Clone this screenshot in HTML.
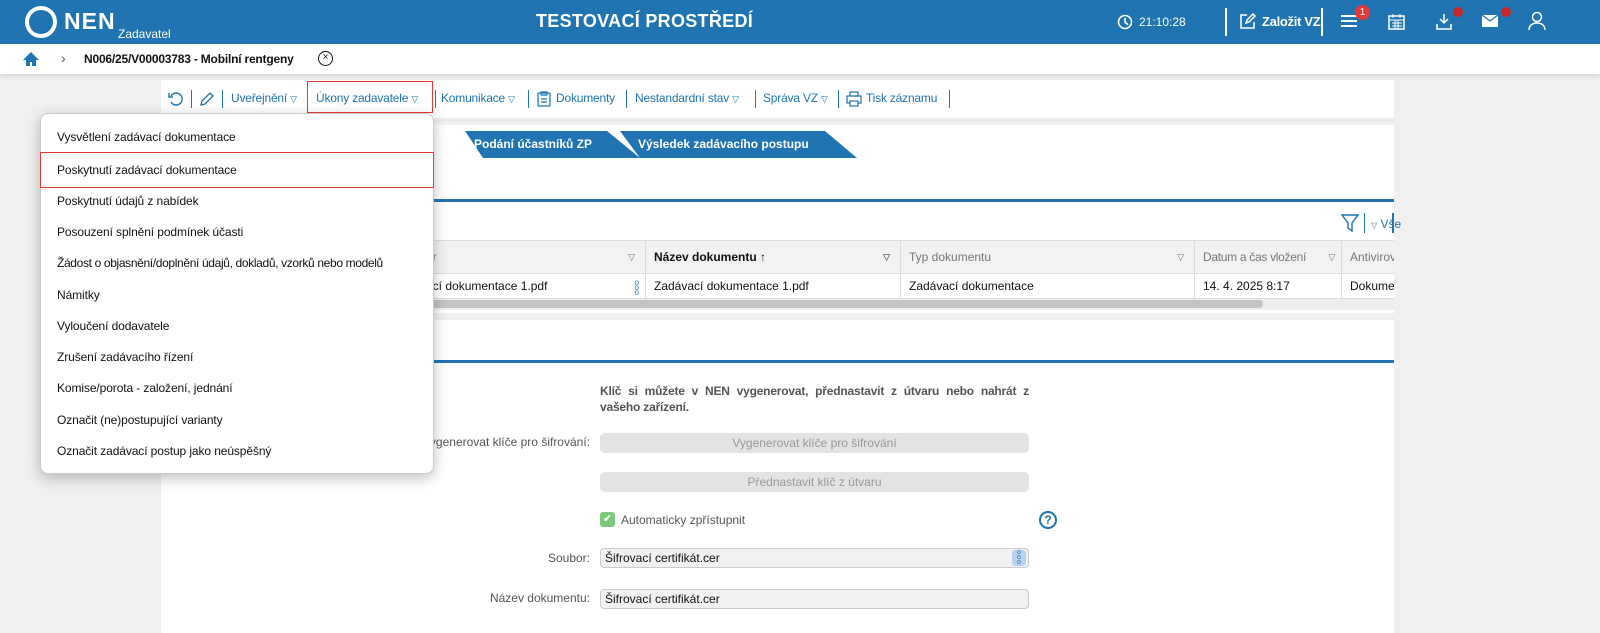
<!DOCTYPE html>
<html><head><meta charset="utf-8">
<style>
*{box-sizing:border-box;margin:0;padding:0}
body{width:1600px;height:633px;overflow:hidden;background:#f0f0f0;font-family:"Liberation Sans",sans-serif;font-size:12px;color:#111;position:relative;white-space:nowrap}
.abs{position:absolute}
#hdr{left:0;top:0;width:1600px;height:44px;background:#1f74b1;color:#fff}
#bc{left:0;top:44px;width:1600px;height:30px;background:#fff;box-shadow:0 2px 4px rgba(0,0,0,.12)}
.panel{background:#fff;left:161px;width:1233px}
.tb{color:#1f74b1;font-size:12px;top:91px;letter-spacing:-.2px}
.sep{width:1px;height:18px;background:#1f74b1;top:90px}
.tab{top:131px;height:27px;background:#1f74b1;color:#fff;font-weight:bold;font-size:12px;line-height:27px}
.th{top:241px;height:33px;background:#f2f2f2;border-right:1px solid #ddd;color:#777;line-height:33px;padding-left:8px;font-size:12px;overflow:hidden}
.td{top:274px;height:24px;border-right:1px solid #ddd;line-height:24px;padding-left:8px;font-size:12px;overflow:hidden}
.tri{font-size:9px;color:#777}
#dd{left:40px;top:113px;width:394px;height:361px;background:#fff;border:1px solid #ccc;border-radius:8px;box-shadow:0 4px 14px rgba(0,0,0,.25)}
#dd div{position:absolute;left:16px;font-size:12px;color:#111;letter-spacing:-.1px}
.btn{left:600px;width:429px;height:20px;background:#e3e3e3;border-radius:5px;color:#999;text-align:center;line-height:20px;font-size:12px}
.inp{left:600px;width:429px;height:20px;background:#f1f1f1;border:1px solid #ccc;border-radius:4px;line-height:18px;padding-left:4px;font-size:12px}
.lbl{text-align:right;color:#555;font-size:12px}
</style></head><body>
<div id="hdr" class="abs">
 <svg class="abs" style="left:24px;top:6px" width="34" height="32" viewBox="0 0 34 32"><circle cx="17" cy="16" r="14" fill="none" stroke="#fff" stroke-width="4"/><path d="M9 25 L25 7" stroke="#1f74b1" stroke-width="5"/></svg>
 <div class="abs" style="left:64px;top:8px;font-size:23px;font-weight:bold;letter-spacing:1px">NEN</div>
 <div class="abs" style="left:118px;top:27px;font-size:12px">Zadavatel</div>
 <div class="abs" style="left:536px;top:11px;font-size:18px;font-weight:bold;letter-spacing:.3px">TESTOVACÍ PROSTŘEDÍ</div>
 <svg class="abs" style="left:1117px;top:14px" width="16" height="16"><circle cx="8" cy="8" r="6.5" fill="none" stroke="#fff" stroke-width="1.6"/><path d="M8 4v4l3 3" stroke="#fff" stroke-width="1.6" fill="none"/></svg>
 <div class="abs" style="left:1139px;top:15px;font-size:12px">21:10:28</div>
 <div class="abs" style="left:1225px;top:8px;width:2px;height:28px;background:#fff"></div>
 <svg class="abs" style="left:1239px;top:12px" width="18" height="18"><path d="M8 3H2v13h13v-6" fill="none" stroke="#fff" stroke-width="1.5"/><path d="M7 11l1-3 6-6 2 2-6 6z" fill="none" stroke="#fff" stroke-width="1.5"/></svg>
 <div class="abs" style="left:1262px;top:14px;font-size:13px;font-weight:bold;letter-spacing:-.3px">Založit VZ</div>
 <div class="abs" style="left:1321px;top:8px;width:2px;height:28px;background:#fff"></div>
 <div class="abs" style="left:1341px;top:15px;width:16px;height:2px;background:#fff;box-shadow:0 5px 0 #fff,0 10px 0 #fff"></div>
 <div class="abs" style="left:1355px;top:5px;width:15px;height:15px;border-radius:50%;background:#e53935;font-size:10px;text-align:center;line-height:15px">1</div>
 <svg class="abs" style="left:1388px;top:13px" width="18" height="18"><rect x="1" y="3" width="15" height="13" fill="none" stroke="#fff" stroke-width="1.5"/><path d="M1 7h15M5 1v4M12 1v4M4 10h10M4 13h10M7 7v9M10 7v9" stroke="#fff" stroke-width="1"/></svg>
 <svg class="abs" style="left:1434px;top:12px" width="20" height="20"><path d="M10 2v9M6 7l4 4 4-4M3 12v5h14v-5" fill="none" stroke="#fff" stroke-width="1.5"/></svg>
 <div class="abs" style="left:1453px;top:7px;width:10px;height:10px;border-radius:50%;background:#c62828"></div>
 <svg class="abs" style="left:1481px;top:14px" width="18" height="14"><rect x="1" y="1" width="16" height="12" fill="#fff"/><path d="M1 1l8 6 8-6" fill="none" stroke="#1f74b1" stroke-width="1.2"/></svg>
 <div class="abs" style="left:1501px;top:7px;width:10px;height:10px;border-radius:50%;background:#c62828"></div>
 <svg class="abs" style="left:1528px;top:11px" width="18" height="20"><circle cx="9" cy="6" r="4.5" fill="none" stroke="#fff" stroke-width="1.5"/><path d="M1 19c0-5 4-7 8-7s8 2 8 7" fill="none" stroke="#fff" stroke-width="1.5"/></svg>
</div>
<div id="bc" class="abs">
 <svg class="abs" style="left:22px;top:7px" width="18" height="16"><path d="M9 1L1 9h3v6h4v-4h2v4h4V9h3z" fill="#1f74b1"/></svg>
 <div class="abs" style="left:61px;top:6px;color:#555;font-size:14px">›</div>
 <div class="abs" style="left:84px;top:8px;font-weight:bold;font-size:12px;letter-spacing:-.2px">N006/25/V00003783 - Mobilní rentgeny</div>
 <div class="abs" style="left:318px;top:7px;width:15px;height:15px;border:1.5px solid #111;border-radius:50%;font-size:10px;text-align:center;line-height:12px">×</div>
</div>
<div class="abs panel" style="top:80px;height:38px"></div>
<div class="abs" style="left:161px;top:118px;width:1233px;height:4px;background:#ececec"></div>
<svg class="abs" style="left:168px;top:91px" width="16" height="16"><path d="M3 5a6 6 0 1 1 0 6" fill="none" stroke="#1f74b1" stroke-width="1.4"/><path d="M1 2v4h4" fill="none" stroke="#1f74b1" stroke-width="1.4"/></svg>
<div class="abs sep" style="left:191px"></div>
<svg class="abs" style="left:199px;top:91px" width="16" height="16"><path d="M2 14l1-4 8-8 3 3-8 8z" fill="none" stroke="#1f74b1" stroke-width="1.3"/></svg>
<div class="abs sep" style="left:222px"></div>
<div class="abs tb" style="left:231px">Uveřejnění <span style="font-size:9px">▽</span></div>
<div class="abs" style="left:307px;top:81px;width:126px;height:32px;border:1.5px solid #e53935"></div>
<div class="abs tb" style="left:316px">Úkony zadavatele <span style="font-size:9px">▽</span></div>
<div class="abs sep" style="left:435px"></div>
<div class="abs tb" style="left:441px">Komunikace <span style="font-size:9px">▽</span></div>
<div class="abs sep" style="left:528px"></div>
<svg class="abs" style="left:537px;top:91px" width="14" height="16"><rect x="1" y="2" width="12" height="13" rx="1" fill="none" stroke="#1f74b1" stroke-width="1.3"/><path d="M4 1h6v3H4zM4 8h6M4 11h6" fill="none" stroke="#1f74b1" stroke-width="1.2"/></svg>
<div class="abs tb" style="left:556px">Dokumenty</div>
<div class="abs sep" style="left:626px"></div>
<div class="abs tb" style="left:635px">Nestandardní stav <span style="font-size:9px">▽</span></div>
<div class="abs sep" style="left:755px"></div>
<div class="abs tb" style="left:763px">Správa VZ <span style="font-size:9px">▽</span></div>
<div class="abs sep" style="left:838px"></div>
<svg class="abs" style="left:846px;top:91px" width="16" height="16"><rect x="4" y="1" width="8" height="4" fill="none" stroke="#1f74b1" stroke-width="1.2"/><rect x="1" y="5" width="14" height="7" fill="none" stroke="#1f74b1" stroke-width="1.2"/><rect x="4" y="10" width="8" height="5" fill="#fff" stroke="#1f74b1" stroke-width="1.2"/></svg>
<div class="abs tb" style="left:866px">Tisk záznamu</div>
<div class="abs sep" style="left:949px"></div>

<!-- panel 1 -->
<div class="abs panel" style="top:122px;height:191px"></div>
<div class="abs" style="left:161px;top:122px;width:1233px;height:3px;background:#f3f3f3"></div>
<div class="abs tab" style="left:455px;width:185px;clip-path:polygon(10px 0,152px 0,185px 27px,28px 27px);padding-left:19px">Podání účastníků ZP</div>
<div class="abs tab" style="left:620px;width:237px;clip-path:polygon(0 0,205px 0,237px 27px,20px 27px);padding-left:18px">Výsledek zadávacího postupu</div>
<div class="abs" style="left:161px;top:199px;width:1233px;height:3px;background:#1f74b1"></div>
<svg class="abs" style="left:1341px;top:213px" width="18" height="20"><path d="M1 2h16l-6 8v8l-4-3v-5z" fill="none" stroke="#1f74b1" stroke-width="1.4"/></svg>
<div class="abs" style="left:1364px;top:213px;width:1px;height:20px;background:#1f74b1"></div>
<div class="abs" style="left:1371px;top:217px;color:#1f74b1;font-size:12px"><span style="font-size:8px">▽</span> Vše</div>
<div class="abs" style="left:1392px;top:213px;width:2px;height:20px;background:#1f74b1"></div>
<div class="abs" style="left:161px;top:240px;width:1233px;height:1px;background:#ddd"></div>
<div class="abs th" style="left:161px;width:485px;padding-left:265px">or<span class="abs tri" style="right:10px">▽</span></div>
<div class="abs th" style="left:646px;width:255px;color:#111;font-weight:bold">Název dokumentu <span style="font-weight:normal">↑</span><span class="abs tri" style="right:10px">▽</span></div>
<div class="abs th" style="left:901px;width:294px">Typ dokumentu<span class="abs tri" style="right:10px">▽</span></div>
<div class="abs th" style="left:1195px;width:147px;letter-spacing:-.3px">Datum a čas vložení<span class="abs tri" style="right:6px">▽</span></div>
<div class="abs th" style="left:1342px;width:52px;border:none">Antivirov</div>
<div class="abs" style="left:161px;top:273px;width:1233px;height:1px;background:#ddd"></div>
<div class="abs td" style="left:161px;width:485px;padding-left:265px">ací dokumentace 1.pdf<span class="abs" style="right:6px;color:#1f74b1;font-size:8px;line-height:5px;top:6px">o<br>o<br>o</span></div>
<div class="abs td" style="left:646px;width:255px">Zadávací dokumentace 1.pdf</div>
<div class="abs td" style="left:901px;width:294px">Zadávací dokumentace</div>
<div class="abs td" style="left:1195px;width:147px">14. 4. 2025 8:17</div>
<div class="abs td" style="left:1342px;width:52px;border:none">Dokume</div>
<div class="abs" style="left:161px;top:298px;width:1233px;height:1px;background:#ddd"></div>
<div class="abs" style="left:161px;top:299px;width:1233px;height:11px;background:#eee"></div>
<div class="abs" style="left:161px;top:300px;width:1102px;height:8px;background:#c4c4c4;border-radius:4px"></div>

<!-- panel 2 -->
<div class="abs panel" style="top:320px;height:313px"></div>
<div class="abs" style="left:161px;top:360px;width:1233px;height:3px;background:#1f74b1"></div>
<div class="abs" style="left:600px;top:383px;width:429px;color:#555;font-weight:bold;font-size:12px;line-height:16px;text-align:justify;text-align-last:left;white-space:normal;letter-spacing:-.2px">Klíč si můžete v NEN vygenerovat, přednastavit z útvaru nebo nahrát z vašeho zařízení.</div>
<div class="abs lbl" style="left:434px;top:435px;width:156px;overflow:hidden"><span style="float:right">vygenerovat klíče pro šifrování:</span></div>
<div class="abs btn" style="top:433px">Vygenerovat klíče pro šifrování</div>
<div class="abs btn" style="top:472px">Přednastavit klíč z útvaru</div>
<div class="abs" style="left:600px;top:512px;width:15px;height:15px;background:#7cc97e;border-radius:3px;color:#fff;font-size:11px;text-align:center;line-height:15px">✔</div>
<div class="abs" style="left:621px;top:513px;color:#555">Automaticky zpřístupnit</div>
<div class="abs" style="left:1039px;top:511px;width:18px;height:18px;border:2px solid #1f74b1;border-radius:50%;color:#1f74b1;font-weight:bold;font-size:12px;text-align:center;line-height:14px">?</div>
<div class="abs lbl" style="left:400px;top:551px;width:190px">Soubor:</div>
<div class="abs inp" style="top:548px">Šifrovací certifikát.cer<span class="abs" style="right:2px;top:1px;width:14px;height:16px;background:#b7d3f0;border-radius:3px;color:#1f74b1;font-size:7px;line-height:5px;text-align:center">o<br>o<br>o</span></div>
<div class="abs lbl" style="left:400px;top:591px;width:190px">Název dokumentu:</div>
<div class="abs inp" style="top:589px">Šifrovací certifikát.cer</div>

<!-- dropdown -->
<div id="dd" class="abs">
 <div style="top:16px">Vysvětlení zadávací dokumentace</div>
 <div style="left:-1px;top:38px;width:394px;height:36px;border:1.5px solid #e53935"></div>
 <div style="top:49px">Poskytnutí zadávací dokumentace</div>
 <div style="top:80px">Poskytnutí údajů z nabídek</div>
 <div style="top:111px">Posouzení splnění podmínek účasti</div>
 <div style="top:142px;letter-spacing:-.35px">Žádost o objasnění/doplnění údajů, dokladů, vzorků nebo modelů</div>
 <div style="top:174px">Námitky</div>
 <div style="top:205px">Vyloučení dodavatele</div>
 <div style="top:236px">Zrušení zadávacího řízení</div>
 <div style="top:267px">Komise/porota - založení, jednání</div>
 <div style="top:299px">Označit (ne)postupující varianty</div>
 <div style="top:330px">Označit zadávací postup jako neúspěšný</div>
</div>
</body></html>
